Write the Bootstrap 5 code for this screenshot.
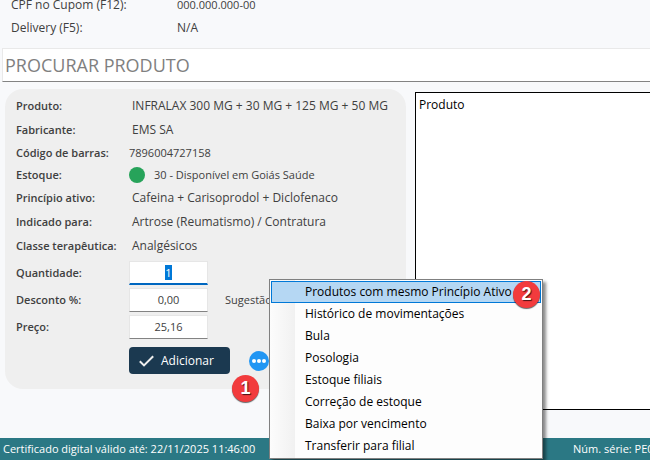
<!DOCTYPE html>
<html lang="pt-BR">
<head>
<meta charset="utf-8">
<meta name="viewport" content="width=device-width, initial-scale=1">
<title>Procurar produto</title>
<link rel="stylesheet" href="https://cdn.jsdelivr.net/npm/bootstrap@5.3.0/dist/css/bootstrap.min.css">
<style>
body{background:#f8f9fb;color:#404040;font-family:"Open Sans","Noto Sans",sans-serif;font-size:12px;line-height:16px}
.page-shell{overflow:hidden}
.order-info{margin:-3px 0 0;padding-left:11px}
.order-info dt{width:166px;font-weight:400}
.order-line{height:23px}
.fine{font-size:11px}
.search-box{height:34px;margin:5px 0 7px 2px;padding:0 2px;border:1px solid #e9e9e9;border-right:0;border-bottom:1px solid #838383;background:#fff;color:#333;font-size:18px;line-height:24px;outline:0}
.search-box::placeholder{color:#808080;opacity:1}
.product-panel{width:401px;height:300px;margin-left:5px;padding:5px 11px 0;background:#efefef;border-radius:18px}
.detail-line{height:24px}
.detail-line.tight{height:22px}
.detail-line dt,.field-line label{width:116px;font-size:11px;font-weight:600;flex:none}
.detail-line dd.code,.detail-line dd.stock{margin-left:-3px!important}
.stock-dot{width:16px;height:16px;background:#27a35a;margin-right:9px}
.field-set{margin-top:1px}
.field-line{height:27px}
.field-line label{width:113px}
.num-input{width:79px;height:24px;border:1px solid #e6e6e6;border-bottom:1px solid #838383;background:#fff;text-align:center;color:#404040;outline:0;padding:0;font-size:11px}
.num-input:focus{border-bottom:2px solid #0067c0}
.num-input::selection{background:#0078d7;color:#fff}
.hint-text{margin-left:17px}
.action-line{margin:7px 0 0 113px}
.add-btn{width:101px;height:27px;background:#1b3950;border-radius:4px;color:#fff;font-size:12px;line-height:16px;padding:0 0 0 10px;gap:7px}
.add-btn:hover{background:#244a66;color:#fff}
.more-wrap{margin-left:19px}
.more-btn{width:20px;height:20px}
.context-list{left:20px;top:-72px;width:274px;padding:1px;border:1px solid #808080;background:linear-gradient(90deg,#fcfcfc 0,#f1f1f1 25px,#fdfdfd 25px);box-shadow:3px 3px 3px rgba(0,0,0,.45);z-index:5}
.context-list button{height:22px;padding:0 0 0 33px;border:1px solid transparent;background:none;color:#000;font-size:12px;line-height:16px}
.context-list button.chosen{background:#b5d7f3;border-color:#0078d7}
.step-mark{width:27px;height:27px;background:#f23b3d;color:#fff;font:700 18px/27px "Liberation Sans",Arial,sans-serif;box-shadow:0 1px 1px rgba(0,0,0,.6);text-shadow:1px 1px 1px rgba(0,0,0,.7);z-index:6}
.step-one{left:-17px;top:24px}
.step-two{right:2px;top:1px}
.result-box{margin:3px 0 0 9px;height:318px;border:1px solid #000;border-right:0;background:#fff;color:#000;padding:4px 3px}
.result-box th{font-weight:400;padding:0}
.status-bar{height:22px;background:#2b7884;color:#fff;padding:0 3px}
.status-left{width:570px;flex:none}
</style>
</head>
<body>
<div class="page-shell d-flex flex-column min-vh-100">
  <dl class="order-info">
    <div class="order-line d-flex"><dt>CPF no Cupom (F12):</dt><dd class="m-0 fine">000.000.000-00</dd></div>
    <div class="order-line d-flex"><dt>Delivery (F5):</dt><dd class="m-0">N/A</dd></div>
  </dl>
  <input class="search-box" type="text" placeholder="PROCURAR PRODUTO" aria-label="Procurar produto">
  <main class="d-flex align-items-start">
    <section class="product-panel flex-shrink-0">
      <dl class="m-0">
        <div class="detail-line d-flex align-items-center"><dt>Produto:</dt><dd class="m-0">INFRALAX 300 MG + 30 MG + 125 MG + 50 MG</dd></div>
        <div class="detail-line d-flex align-items-center"><dt>Fabricante:</dt><dd class="m-0">EMS SA</dd></div>
        <div class="detail-line tight d-flex align-items-center"><dt>Código de barras:</dt><dd class="code m-0 fine">7896004727158</dd></div>
        <div class="detail-line tight d-flex align-items-center"><dt>Estoque:</dt><dd class="stock m-0 fine d-flex align-items-center"><span class="stock-dot rounded-circle"></span>30 - Disponível em Goiás Saúde</dd></div>
        <div class="detail-line d-flex align-items-center"><dt>Princípio ativo:</dt><dd class="m-0">Cafeina + Carisoprodol + Diclofenaco</dd></div>
        <div class="detail-line d-flex align-items-center"><dt>Indicado para:</dt><dd class="m-0">Artrose (Reumatismo) / Contratura</dd></div>
        <div class="detail-line d-flex align-items-center"><dt>Classe terapêutica:</dt><dd class="m-0">Analgésicos</dd></div>
      </dl>
      <div class="field-set">
        <div class="field-line d-flex align-items-center"><label for="qty">Quantidade:</label><input class="num-input" id="qty" type="text" value="1"></div>
        <div class="field-line d-flex align-items-center"><label for="disc">Desconto %:</label><input class="num-input" id="disc" type="text" value="0,00"><span class="hint-text fine">Sugestão</span></div>
        <div class="field-line d-flex align-items-center"><label for="price">Preço:</label><input class="num-input" id="price" type="text" value="25,16"></div>
      </div>
      <div class="action-line d-flex align-items-center">
        <button type="button" class="add-btn btn border-0 d-flex align-items-center">
          <svg width="15" height="12" viewBox="0 0 15 12" fill="none" stroke="#eee" stroke-width="2" aria-hidden="true"><path d="M.8 6.2 5 10.4 14.2 1.2"/></svg>Adicionar</button>
        <div class="more-wrap position-relative">
          <button type="button" class="more-btn border-0 p-0 bg-transparent d-block" aria-label="Mais opções">
            <svg class="d-block" width="20" height="20" viewBox="0 0 20 20" aria-hidden="true"><circle cx="10" cy="10" r="10" fill="#2196f3"/><g fill="#fff"><circle cx="5" cy="10" r="2"/><circle cx="10" cy="10" r="2"/><circle cx="15" cy="10" r="2"/></g></svg>
          </button>
          <span class="step-mark step-one position-absolute rounded-circle text-center">1</span>
          <div class="context-list position-absolute d-flex flex-column" role="menu">
            <button type="button" role="menuitem" class="chosen text-start">Produtos com mesmo Princípio Ativo</button>
            <button type="button" role="menuitem" class="text-start">Histórico de movimentações</button>
            <button type="button" role="menuitem" class="text-start">Bula</button>
            <button type="button" role="menuitem" class="text-start">Posologia</button>
            <button type="button" role="menuitem" class="text-start">Estoque filiais</button>
            <button type="button" role="menuitem" class="text-start">Correção de estoque</button>
            <button type="button" role="menuitem" class="text-start">Baixa por vencimento</button>
            <button type="button" role="menuitem" class="text-start">Transferir para filial</button>
            <span class="step-mark step-two position-absolute rounded-circle text-center">2</span>
          </div>
        </div>
      </div>
    </section>
    <div class="result-box flex-grow-1"><table><thead><tr><th scope="col">Produto</th></tr></thead></table></div>
  </main>
  <footer class="status-bar fine mt-auto d-flex align-items-center text-nowrap overflow-hidden">
    <span class="status-left">Certificado digital válido até: 22/11/2025 11:46:00</span>
    <span>Núm. série: PE0</span>
  </footer>
</div>
<script src="https://cdn.jsdelivr.net/npm/bootstrap@5.3.0/dist/js/bootstrap.bundle.min.js"></script>
<script>
const qty = document.getElementById('qty');
qty.focus({preventScroll: true});
qty.select();
</script>
</body>
</html>
